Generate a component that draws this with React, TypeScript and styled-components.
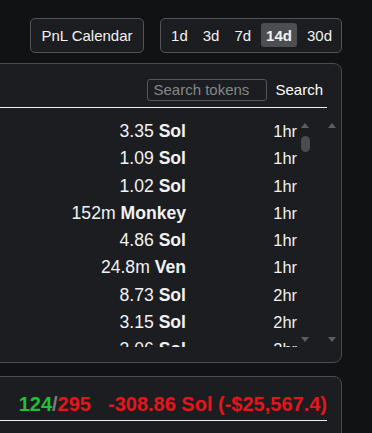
import React from 'react'
import styled, { createGlobalStyle } from 'styled-components'

const GlobalStyle = createGlobalStyle`
  html, body {
    margin: 0;
    padding: 0;
    background: #111214;
    color: #f2f2f2;
    font-family: 'Liberation Sans', Arial, sans-serif;
  }
`

const Page = styled.div`
  width: 372px;
  height: 433px;
  overflow: hidden;
  box-sizing: border-box;
  padding: 18px 30px 0 0;
`

const TopBar = styled.div`
  display: flex;
  justify-content: flex-end;
  align-items: center;
  gap: 16px;
`

const OutlineButton = styled.button`
  height: 34.5px;
  padding: 0 10.5px;
  background: #1b1d20;
  color: #f2f2f2;
  border: 1px solid #515356;
  border-radius: 5px;
  font-family: inherit;
  font-size: 15px;
`

const PeriodGroup = styled.div`
  display: flex;
  align-items: center;
  gap: 5px;
  height: 34.5px;
  box-sizing: border-box;
  padding: 0 4px 0 5px;
  background: #1b1d20;
  border: 1px solid #515356;
  border-radius: 5px;
`

const PeriodButton = styled.button<{ $active?: boolean }>`
  height: 24px;
  padding: 0 5px;
  border: none;
  border-radius: 3px;
  background: ${(p) => (p.$active ? '#4c4e51' : 'transparent')};
  color: #f2f2f2;
  font-family: inherit;
  font-size: 15px;
  font-weight: ${(p) => (p.$active ? 700 : 400)};
`

const Panel = styled.div`
  margin-left: -20px;
  background: #1b1d20;
  border: 1px solid #4a4c4f;
  border-radius: 8px;
`

const TokensPanel = styled(Panel)`
  margin-top: 10.5px;
  height: 300px;
  box-sizing: border-box;
`

const SearchRow = styled.div`
  display: flex;
  justify-content: flex-end;
  align-items: center;
  gap: 8px;
  margin-right: 14px;
  padding: 14.5px 4px 6px 0;
  border-bottom: 1px solid #ececec;
`

const SearchInput = styled.input`
  width: 120px;
  height: 22px;
  box-sizing: border-box;
  padding: 0 5px;
  background: #1b1d20;
  border: 1px solid #55575a;
  border-radius: 3px;
  color: #f2f2f2;
  font-family: inherit;
  font-size: 15px;
  &::placeholder {
    color: #85878a;
  }
`

const SearchLabel = styled.span`
  font-size: 15px;
  color: #ffffff;
`

const ListArea = styled.div`
  display: flex;
  margin-top: 10.5px;
  height: 229px;
`

const List = styled.div`
  flex: 1;
  overflow: hidden;
`

const Row = styled.div`
  display: grid;
  grid-template-columns: 205px 1fr;
  height: 27.3px;
  line-height: 27.3px;
  white-space: nowrap;
`

const Amount = styled.div`
  text-align: right;
  font-size: 17.6px;
  b {
    font-weight: 700;
  }
`

const Age = styled.div`
  text-align: right;
  padding-right: 1px;
  font-size: 16.4px;
`

const Track = styled.div<{ $gap?: number }>`
  display: flex;
  flex-direction: column;
  align-items: center;
  width: 14px;
  margin-left: ${(p) => p.$gap ?? 0}px;
`

const ArrowBox = styled.div`
  height: 15px;
  display: flex;
  align-items: center;
  justify-content: center;
`

const ArrowUp = styled.div`
  width: 0;
  height: 0;
  border-left: 4.5px solid transparent;
  border-right: 4.5px solid transparent;
  border-bottom: 5.5px solid #5b5d60;
`

const ArrowDown = styled(ArrowUp)`
  border-bottom: none;
  border-top: 5.5px solid #5b5d60;
`

const Thumb = styled.div`
  width: 9px;
  height: 16.5px;
  margin-top: 2.5px;
  border-radius: 5px;
  background: #4a4c4f;
`

const Spacer = styled.div`
  flex: 1;
`

const EdgeGap = styled.div`
  flex: 0 0 2px;
`

const SummaryPanel = styled(Panel)`
  margin-top: 13px;
  height: 80px;
`

const SummaryRow = styled.div`
  display: flex;
  justify-content: flex-end;
  gap: 17px;
  margin-right: 14px;
  padding: 15.5px 0 4.5px;
  border-bottom: 1px solid #ececec;
  font-size: 20px;
  font-weight: 700;
  white-space: nowrap;
`

const Tone = styled.span<{ $tone: 'win' | 'loss' | 'muted' }>`
  color: ${(p) =>
    p.$tone === 'win' ? '#20c22d' : p.$tone === 'loss' ? '#e9141b' : '#7a7c80'};
`

const rows = [
  ['3.35', 'Sol', '1hr'],
  ['1.09', 'Sol', '1hr'],
  ['1.02', 'Sol', '1hr'],
  ['152m', 'Monkey', '1hr'],
  ['4.86', 'Sol', '1hr'],
  ['24.8m', 'Ven', '1hr'],
  ['8.73', 'Sol', '2hr'],
  ['3.15', 'Sol', '2hr'],
  ['3.06', 'Sol', '2hr'],
]

const periods = ['1d', '3d', '7d', '14d', '30d']

const Scrollbar = ({ gap, thumb }: { gap?: number; thumb?: boolean }) => (
  <Track $gap={gap}>
    <ArrowBox>
      <ArrowUp />
    </ArrowBox>
    {thumb && <Thumb />}
    <Spacer />
    <ArrowBox>
      <ArrowDown />
    </ArrowBox>
  </Track>
)

export default function App() {
  return (
    <Page>
      <GlobalStyle />
      <TopBar>
        <OutlineButton>PnL Calendar</OutlineButton>
        <PeriodGroup>
          {periods.map((p) => (
            <PeriodButton key={p} $active={p === '14d'}>
              {p}
            </PeriodButton>
          ))}
        </PeriodGroup>
      </TopBar>

      <TokensPanel>
        <SearchRow>
          <SearchInput placeholder="Search tokens" />
          <SearchLabel>Search</SearchLabel>
        </SearchRow>
        <ListArea>
          <List>
            {rows.map(([value, unit, age], i) => (
              <Row key={i}>
                <Amount>
                  {value} <b>{unit}</b>
                </Amount>
                <Age>{age}</Age>
              </Row>
            ))}
          </List>
          <Scrollbar thumb />
          <Scrollbar gap={13} />
          <EdgeGap />
        </ListArea>
      </TokensPanel>

      <SummaryPanel>
        <SummaryRow>
          <span>
            <Tone $tone="win">124</Tone>
            <Tone $tone="muted">/</Tone>
            <Tone $tone="loss">295</Tone>
          </span>
          <Tone $tone="loss">-308.86 Sol (-$25,567.4)</Tone>
        </SummaryRow>
      </SummaryPanel>
    </Page>
  )
}
